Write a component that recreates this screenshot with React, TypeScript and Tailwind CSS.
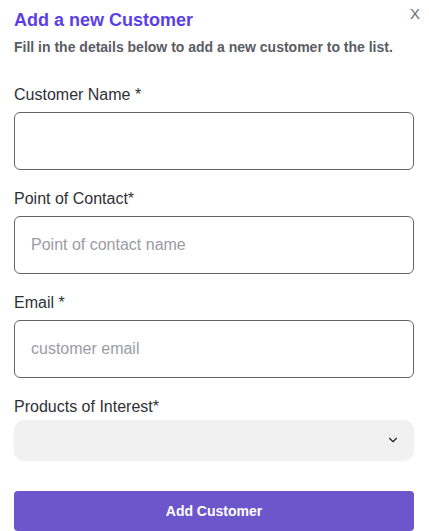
import { ChevronDown } from 'lucide-react';

export default function App() {
  return (
    <div className="relative h-[531px] w-[429px] overflow-hidden bg-white px-[14px] font-['Liberation_Sans',Arial,sans-serif]">
      <button className="absolute right-[9px] top-[3px] text-[15px] text-[#6b6d74]">X</button>

      <h1 className="pt-[9px] text-[18px] font-bold leading-[22px] text-[#5b3fe6]">Add a new Customer</h1>
      <p className="mt-[8px] text-[14px] font-bold leading-[17px] text-[#5a5c63]">
        Fill in the details below to add a new customer to the list.
      </p>

      <form className="mt-[29px] flex flex-col">
        <label className="text-[16px] leading-[20px] text-[#2f3036]">Customer Name *</label>
        <input
          type="text"
          className="mt-[7px] h-[58px] w-[400px] rounded-[6px] border border-[#64656c] px-4 text-[16px] outline-none"
        />

        <label className="mt-[19px] text-[16px] leading-[20px] text-[#2f3036]">Point of Contact*</label>
        <input
          type="text"
          placeholder="Point of contact name"
          className="mt-[7px] h-[58px] w-[400px] rounded-[6px] border border-[#64656c] px-4 text-[16px] outline-none placeholder:text-[#9a9ca3]"
        />

        <label className="mt-[19px] text-[16px] leading-[20px] text-[#2f3036]">Email *</label>
        <input
          type="email"
          placeholder="customer email"
          className="mt-[7px] h-[58px] w-[400px] rounded-[6px] border border-[#64656c] px-4 text-[16px] outline-none placeholder:text-[#9a9ca3]"
        />

        <label className="mt-[19px] text-[16px] leading-[20px] text-[#2f3036]">Products of Interest*</label>
        <div className="mt-[3px] flex h-[40px] w-[400px] items-center justify-end rounded-[10px] bg-[#f1f1f1] pr-[14px] shadow-[0_1px_2px_rgba(0,0,0,0.06)]">
          <ChevronDown size={14} strokeWidth={2} className="text-[#222]" />
        </div>

        <button
          type="button"
          className="mt-[31px] h-[40px] w-[400px] rounded-[4px] bg-[#6b56cc] text-[14px] font-semibold text-white"
        >
          Add Customer
        </button>
      </form>
    </div>
  );
}
